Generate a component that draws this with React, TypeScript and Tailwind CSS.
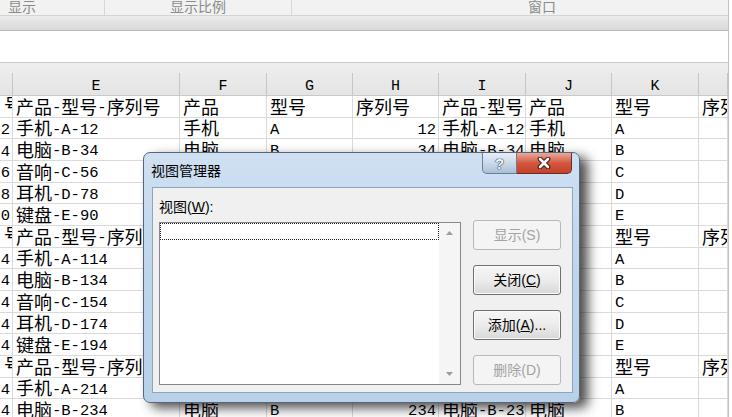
import React from "react";

const W = [
  "w-[13px]",
  "w-[167px]",
  "w-[87px]",
  "w-[86px]",
  "w-[86px]",
  "w-[87px]",
  "w-[86px]",
  "w-[87px]",
  "w-[29px]",
];

const letters = ["", "E", "F", "G", "H", "I", "J", "K", ""];

const headRow = ["号", "产品-型号-序列号", "产品", "型号", "序列号", "产品-型号-序列号", "产品", "型号", "序列号"];

const items = [
  ["手机", "A"],
  ["电脑", "B"],
  ["音响", "C"],
  ["耳机", "D"],
  ["键盘", "E"],
];

function group(tails: string[], nums: string[]) {
  return items.map(([p, m], i) => {
    const code = `${p}-${m}-${nums[i]}`;
    return [tails[i], code, p, m, nums[i], code, p, m, ""];
  });
}

const rows: string[][] = [
  headRow,
  ...group(["2", "4", "6", "8", "0"], ["12", "34", "56", "78", "90"]),
  headRow,
  ...group(["4", "4", "4", "4", "4"], ["114", "134", "154", "174", "194"]),
  headRow,
  ...group(["4", "4", "4", "4", "4"], ["214", "234", "254", "274", "294"]).slice(0, 2),
];

// CJK runs are drawn a bit bigger than the latin ones, like SimSun in the sheet
function Txt({ s }: { s: string }) {
  const parts = s.split(/([\u4e00-\u9fff]+)/).filter(Boolean);
  return (
    <>
      {parts.map((p, i) =>
        /[\u4e00-\u9fff]/.test(p) ? (
          <span key={i} className="text-[18px] leading-none">
            {p}
          </span>
        ) : (
          <span key={i} className="leading-none">
            {p}
          </span>
        )
      )}
    </>
  );
}

function Cell({ w, text, col }: { w: string; text: string; col: number }) {
  if (col === 0) {
    return (
      <div className={`${w} h-full shrink-0 flex items-center justify-end pt-[5px] overflow-hidden whitespace-nowrap border-r border-[#dadada]`}>
        <span className={text === "号" ? "-mr-[10px]" : "mr-[2px]"}>
          <Txt s={text} />
        </span>
      </div>
    );
  }
  const num = /^\d+$/.test(text);
  return (
    <div
      className={
        num
          ? `${w} h-full shrink-0 flex items-center justify-end pr-[2px] pt-[5px] overflow-hidden whitespace-nowrap border-r border-[#dadada]`
          : `${w} h-full shrink-0 flex items-center pl-[3px] pt-[5px] overflow-hidden whitespace-nowrap border-r border-[#dadada]`
      }
    >
      <Txt s={text} />
    </div>
  );
}

function Btn({ label, u, rest, disabled }: { label: string; u: string; rest: string; disabled?: boolean }) {
  return (
    <div
      className={
        disabled
          ? "h-[30px] w-[88px] rounded-[3px] border border-[#b5b9bd] bg-[#f4f4f4] text-[#a3a3a3] text-[14px] flex items-center justify-center"
          : "h-[30px] w-[88px] rounded-[3px] border border-[#707070] bg-gradient-to-b from-[#f6f6f6] via-[#ececec] to-[#d8d8d8] shadow-[inset_0_0_0_1px_#fbfbfb] text-black text-[14px] flex items-center justify-center"
      }
    >
      {label}(<span className={disabled ? "" : "underline"}>{u}</span>){rest}
    </div>
  );
}

export default function App() {
  return (
    <div className="relative w-[732px] h-[417px] overflow-hidden bg-white flex font-['Liberation_Mono','Noto_Sans_CJK_SC',monospace] text-[15.5px] text-black">
      <div className="w-[728px] shrink-0 flex flex-col">
        {/* ribbon group labels */}
        <div className="h-[16px] shrink-0 flex bg-[#f2f2f2] border-b border-[#d4d4d4] overflow-hidden font-['Noto_Sans_CJK_SC',sans-serif] text-[14px] text-[#8a8a8a] leading-none">
          <div className="w-[105px] border-r border-[#d6d6d6] pl-[8px]">
            <span className="block -translate-y-[1px]">显示</span>
          </div>
          <div className="w-[187px] border-r border-[#d6d6d6] flex justify-center">
            <span className="block -translate-y-[1px]">显示比例</span>
          </div>
          <div className="flex-1 pl-[236px]">
            <span className="block -translate-y-[1px]">窗口</span>
          </div>
        </div>
        <div className="h-[15px] shrink-0 bg-gradient-to-b from-[#ececec] via-[#e2e2e2] to-[#d9d9d9] border-b border-[#b9b9b9]" />
        <div className="h-[31px] shrink-0 bg-white" />

        {/* column headers */}
        <div className="h-[34px] shrink-0 flex border-t border-b border-[#c9c9c9] bg-gradient-to-b from-[#efefef] to-[#e4e4e4]">
          {letters.map((l, i) => (
            <div key={i} className={`${W[i]} shrink-0 h-full flex items-end`}>
              <div className="h-[22px] w-full border-r border-[#c6c6c6] flex items-end justify-center text-[15px] leading-none pb-[1px]">
                {l}
              </div>
            </div>
          ))}
        </div>

        {/* sheet rows */}
        {rows.map((r, ri) => (
          <div key={ri} className="h-[21.67px] shrink-0 flex border-b border-[#dadada]">
            {r.map((t, ci) => (
              <Cell key={ci} w={W[ci]} text={t} col={ci} />
            ))}
          </div>
        ))}
      </div>
      <div className="w-[1px] bg-[#c2c2c2]" />
      <div className="flex-1 bg-white" />

      {/* view manager dialog */}
      <div className="absolute left-[143px] top-[152px] w-[437px] h-[251px] rounded-[7px] border border-[#56657a] bg-gradient-to-b from-[#cfe0f2] via-[#bed4eb] to-[#b9d0e9] shadow-[8px_5px_12px_rgba(0,0,0,0.7)] flex flex-col font-['Liberation_Sans','Noto_Sans_CJK_SC',sans-serif]">
        <div className="relative h-[34px] shrink-0 flex items-center pl-[7px] pt-[2px] text-[14px] leading-none text-black">
          视图管理器
          <div className="absolute right-[7px] top-0 flex">
            <div className="w-[35px] h-[21px] rounded-bl-[5px] border border-t-0 border-[#6c7e94] bg-gradient-to-b from-[#e6eef7] via-[#cbdaea] to-[#a9bfd7] flex items-center justify-center text-[15px] font-bold text-[#f4f7fb] [text-shadow:0_0_1px_#243548,0_0_1px_#243548,0_0_1px_#243548]">
              ?
            </div>
            <div className="w-[55px] h-[21px] rounded-br-[5px] border border-t-0 border-l-0 border-[#6e2b22] bg-gradient-to-b from-[#e9a99c] via-[#d2563f] to-[#c5402a] flex items-center justify-center">
              <svg width="14" height="12" viewBox="0 0 14 12">
                <path d="M3 2 L11 10 M11 2 L3 10" stroke="#4a1810" strokeWidth="4.6" strokeLinecap="round" fill="none" />
                <path d="M3 2 L11 10 M11 2 L3 10" stroke="#ffffff" strokeWidth="2.6" strokeLinecap="round" fill="none" />
              </svg>
            </div>
          </div>
        </div>

        <div className="ml-[8px] mr-[6px] mb-[9px] flex-1 border border-[#8fa3ba] bg-[#f0f0f0] flex pl-[6px]">
          <div className="flex flex-col pt-[11px]">
            <div className="h-[16px] flex items-center text-[14px] leading-none">
              视图(<span className="underline">W</span>):
            </div>
            <div className="mt-[7px] w-[302px] h-[163px] border border-[#828790] bg-white flex">
              <div className="flex-1">
                <div className="h-[17px] border border-dotted border-[#222]" />
              </div>
              <div className="w-[21px] bg-[#f5f5f5] flex flex-col items-center justify-between py-[8px]">
                <svg width="7" height="4" viewBox="0 0 7 4">
                  <path d="M0 4 L3.5 0 L7 4 Z" fill="#9c9c9c" />
                </svg>
                <svg width="7" height="4" viewBox="0 0 7 4">
                  <path d="M0 0 L3.5 4 L7 0 Z" fill="#9c9c9c" />
                </svg>
              </div>
            </div>
          </div>
          <div className="ml-[12px] pt-[32px] flex flex-col gap-[15px]">
            <Btn label="显示" u="S" rest="" disabled />
            <Btn label="关闭" u="C" rest="" />
            <Btn label="添加" u="A" rest="..." />
            <Btn label="删除" u="D" rest="" disabled />
          </div>
        </div>
      </div>
    </div>
  );
}
